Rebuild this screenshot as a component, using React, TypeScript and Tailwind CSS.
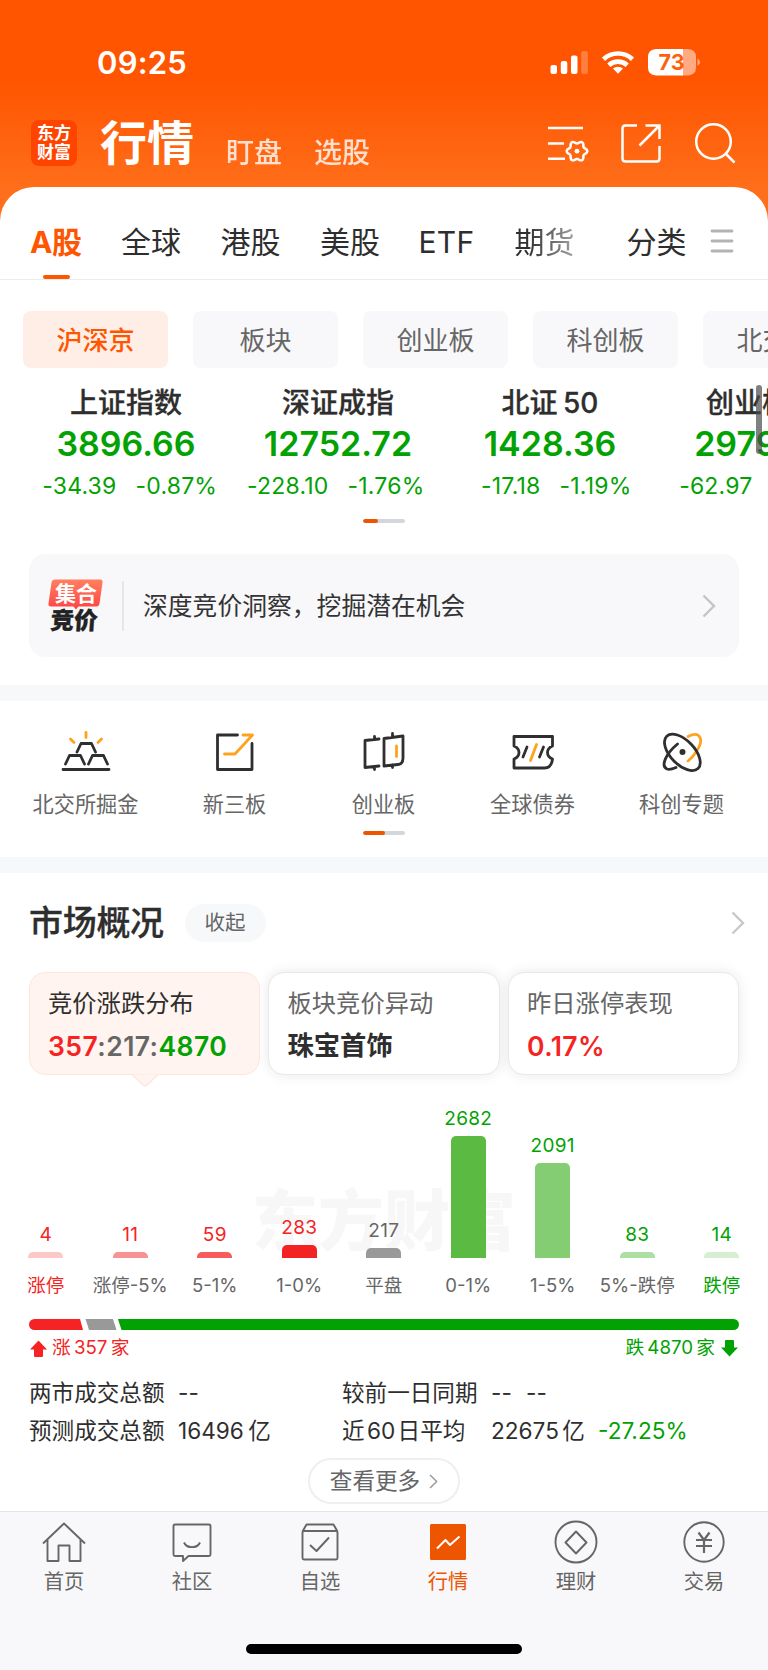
import { ReactNode } from 'react'

const tabs = ['全球', '港股', '美股']

const boards = ['沪深京', '板块', '创业板', '科创板', '北交所']

const indexes = [
  { name: '上证指数', value: '3896.66', diff: '-34.39', pct: '-0.87%' },
  { name: '深证成指', value: '12752.72', diff: '-228.10', pct: '-1.76%' },
  { name: '北证 50', value: '1428.36', diff: '-17.18', pct: '-1.19%' },
  { name: '创业板指', value: '2979.68', diff: '-62.97', pct: '-2.07%' },
]

const bars = [
  { label: '涨停', value: 4, height: 6, bar: 'bg-[#fcc8c8]', num: 'text-[#f52323]', text: 'text-[#f52323]' },
  { label: '涨停-5%', value: 11, height: 6, bar: 'bg-[#f99292]', num: 'text-[#f52323]', text: 'text-[#666]' },
  { label: '5-1%', value: 59, height: 6, bar: 'bg-[#f75b5b]', num: 'text-[#f52323]', text: 'text-[#666]' },
  { label: '1-0%', value: 283, height: 13, bar: 'bg-[#f42323]', num: 'text-[#f52323]', text: 'text-[#666]' },
  { label: '平盘', value: 217, height: 10, bar: 'bg-[#999]', num: 'text-[#666]', text: 'text-[#666]' },
  { label: '0-1%', value: 2682, height: 122, bar: 'bg-[#5bba42]', num: 'text-[#03a203]', text: 'text-[#666]' },
  { label: '1-5%', value: 2091, height: 95, bar: 'bg-[#84cd73]', num: 'text-[#03a203]', text: 'text-[#666]' },
  { label: '5%-跌停', value: 83, height: 6, bar: 'bg-[#addea2]', num: 'text-[#03a203]', text: 'text-[#666]' },
  { label: '跌停', value: 14, height: 6, bar: 'bg-[#d6efd1]', num: 'text-[#03a203]', text: 'text-[#03a203]' },
]

// six-lobed gear outline
const gear = Array.from({ length: 72 }, (_, i) => {
  const a = (i * Math.PI) / 36
  const r = 9 + 1.3 * Math.cos(6 * a)
  return `${(577 + r * Math.cos(a)).toFixed(2)},${(151.2 + r * Math.sin(a)).toFixed(2)}`
}).join(' ')

function Chevron({ className }: { className: string }) {
  return (
    <svg viewBox="0 0 14 24" className={className} fill="none" stroke="currentColor" strokeWidth="2.4">
      <path d="M1.5 1.5 12 12 1.5 22.5" />
    </svg>
  )
}

function StatusBar() {
  return (
    <div className="h-[100px] flex pt-[42px] pl-[97px] text-white">
      <span className="w-[453px] text-[31px] leading-[42px] font-semibold tracking-[0.2px]">09:25</span>
      <svg className="w-[160px] h-[40px]" viewBox="550 42 160 40" fill="#fff">
        <rect x="550.5" y="65" width="6.5" height="9" rx="2" />
        <rect x="560.8" y="61" width="6.5" height="13" rx="2" />
        <rect x="571" y="55.5" width="6.5" height="18.5" rx="2" />
        <rect x="581.3" y="51" width="6.5" height="23" rx="2" opacity=".25" />
        <g fill="none" stroke="#fff" strokeWidth="4.6">
          <path d="M603.5 59.2a21.5 21.5 0 0 1 29 0" />
          <path d="M608.8 65.2a13.6 13.6 0 0 1 18.4 0" />
        </g>
        <path d="M618 73.8l-5-5.2a7.4 7.4 0 0 1 10 0z" />
        <path d="M656 49h27v26.5h-27q-8-.5-8-8v-10.5q0-7.5 8-8z" />
        <path d="M683 49h5q8 .5 8 8v10.5q0 7.5-8 8h-5z" opacity=".5" />
        <path d="M697.5 58.5q2.5 1.5 2.5 3.8t-2.5 3.8z" opacity=".5" />
        <text x="671.5" y="70" textAnchor="middle" fontSize="21.5" fontWeight="700" fill="#ff5f0e">73</text>
      </svg>
    </div>
  )
}

function Header() {
  return (
    <div className="h-[88px] flex items-start pl-[31px] text-white">
      <div className="mt-[20px] w-[46px] h-[46px] rounded-[8px] bg-[#ff4400] flex flex-col items-center justify-center font-bold text-[17px] leading-[19px]">
        <span>东方</span>
        <span>财富</span>
      </div>
      <span className="ml-[23px] mt-[15px] w-[126px] text-[47px] leading-[56px] font-bold">行情</span>
      <span className="mt-[33px] w-[88px] text-[28px] leading-[40px] font-medium opacity-80">盯盘</span>
      <span className="mt-[33px] w-[226px] text-[28px] leading-[40px] font-medium opacity-80">选股</span>
      <svg className="mt-[20px] w-[200px] h-[48px]" viewBox="540 120 200 48" fill="none" stroke="#fff" strokeWidth="2.5">
        <path d="M548 128h35M548 143.5h16M548 158.8h17" />
        <polygon points={gear} strokeLinejoin="round" />
        <circle cx="577" cy="151.2" r="2.4" fill="#fff" stroke="none" />
        <path d="M637 125.500h-11.500q-3 0-3 3v30q0 3 3 3h31q3 0 3-3v-12.500M645.500 125.500h14v13.500M659.500 125.500l-20 20" />
        <circle cx="713.500" cy="141.500" r="17.300" />
        <path d="M725.500 153.500l9 9" />
      </svg>
    </div>
  )
}

function MarketTabs() {
  return (
    <div className="h-[93px] border-b border-[#ececec] text-[30px] leading-[44px] text-[#2e2e2e] pt-[33px] flex pl-[30px]">
      <div className="w-[91px] flex flex-col">
        <span className="text-[#ff5500] font-bold tracking-[-0.3px]">A股</span>
        <span className="mt-[11px] ml-[13px] w-[27px] h-[4px] rounded-full bg-[#ff5500]" />
      </div>
      {tabs.map(tab => (
        <span key={tab} className="w-[99.5px]">{tab}</span>
      ))}
      <span className="w-[95px] -ml-px mr-px tracking-[0.3px]">ETF</span>
      <span className="w-[112px] bg-gradient-to-r from-[#2e2e2e] from-10% to-[#aaa] to-55% bg-clip-text text-transparent">期货</span>
      <span className="w-[83px]">分类</span>
      <svg className="w-[24px] h-[24px] mt-[9px]" viewBox="0 0 24 24" stroke="#b3b3b3" strokeWidth="2.8" strokeLinecap="round">
        <path d="M2 2h20M2 12h20M2 22h20" />
      </svg>
    </div>
  )
}

function Pager({ wide }: { wide?: boolean }) {
  return (
    <div className="mx-auto w-[42px] h-[4px] rounded-full bg-[#d3d6dc] overflow-hidden">
      <div className={`h-full rounded-full bg-[#ee5500] ${wide ? 'w-[22px]' : 'w-[15px]'}`} />
    </div>
  )
}

function Indexes() {
  return (
    <div className="relative h-[237px] mt-[31px] overflow-hidden">
      <div className="flex gap-[25px] pl-[23px] h-[57px]">
        {boards.map((b, i) => (
          <span
            key={b}
            className={`w-[145px] shrink-0 rounded-[8px] text-center text-[26px] leading-[59px] ${i === 0 ? 'bg-[#ffeee5] text-[#ff5500] font-medium' : 'bg-[#f8f8fb] text-[#666]'}`}
          >
            {b}
          </span>
        ))}
      </div>
      <div className="flex pl-[20px] pt-[15px] h-[151px]">
        {indexes.map(item => (
          <div key={item.name} className="w-[212px] shrink-0 text-center whitespace-nowrap">
            <div className="text-[28px] leading-[40px] font-medium text-[#2e2e2e] [-webkit-text-stroke:0.3px] [word-spacing:-2px]">{item.name}</div>
            <div className="text-[34px] leading-[42px] font-semibold text-[#03a203]">{item.value}</div>
            <div className="text-[23px] leading-[42px] tracking-[0.2px] text-[#03a203] flex">
              <span className="w-[96.5px] flex justify-end">{item.diff}</span>
              <span className="ml-[19px]">{item.pct}</span>
            </div>
          </div>
        ))}
      </div>
      <Pager />
      <div className="absolute right-[6px] top-[74px] w-[6px] h-[69px] rounded-full bg-[#4a4a4a]/70" />
    </div>
  )
}

function Banner() {
  return (
    <div className="mx-[29px] mt-[6px] h-[103px] rounded-[16px] bg-[#f8f8fb] flex items-center">
      <svg className="ml-[18px] w-[58px] h-[56px]" viewBox="47 578 58 56">
        <defs>
          <linearGradient id="bubble" x1="0" y1="0" x2="0" y2="1">
            <stop offset="0" stopColor="#ff8060" />
            <stop offset="1" stopColor="#ff4343" />
          </linearGradient>
        </defs>
        <path d="M55 579.5h45q3 0 2.5 3l-3 21q-.5 3-3 3h-18l-2.5 3-2.5-3h-22.5q-3 0-2.5-3l3-21q.5-3 3.5-3z" fill="url(#bubble)" />
        <text x="55" y="601" fontSize="21" fontWeight="700" fill="#fff">集合</text>
        <text x="51" y="629.5" fontSize="23.5" fontWeight="900" fill="#222" stroke="#222" strokeWidth="0.4" transform="skewX(-4) translate(43 0)">竞价</text>
      </svg>
      <div className="ml-[17px] w-[2px] h-[50px] bg-[#e6e6e8]" />
      <span className="ml-[19px] text-[24.8px] leading-[40px] text-[#333]">深度竞价洞察，挖掘潜在机会</span>
      <Chevron className="ml-auto mr-[23px] w-[14px] h-[24px] text-[#c4c4c6]" />
    </div>
  )
}

function Shortcut({ label, children }: { label: string; children: ReactNode }) {
  return (
    <div className="w-[149px] flex flex-col items-center">
      <svg className="w-[50px] h-[42px]" viewBox="-25 -21 50 42" fill="none" stroke="#2f2f2f" strokeWidth="2.8" strokeLinecap="round" strokeLinejoin="round">
        {children}
      </svg>
      <span className="mt-[13px] text-[21.2px] leading-[36px] text-[#666]">{label}</span>
    </div>
  )
}

function Shortcuts() {
  return (
    <div className="h-[156px] pt-[30px]">
      <div className="flex pl-[11px] h-[100px]">
        <Shortcut label="北交所掘金">
          <path d="M-23 17.5h46M-20.5 12l4-8.5h11l4 8.5M2.5 12l4-8.5h11l4 8.5M-9 0l4-8.5h10.5l4 8.5" />
          <path d="M0-19.5v5M-15.5-13l3.500 3.500M15.500-13l-3.500 3.500" stroke="#ffa31e" />
        </Shortcut>
        <Shortcut label="新三板">
          <path d="M2.5-17h-20v34.5h34.5v-26" />
          <path d="M8-17h9.5l-17.5 19h-10.5" stroke="#ffa31e" />
        </Shortcut>
        <Shortcut label="创业板">
          <path d="M-5-13l-14 1.5v27l14-1.5M-9.5-15.5v3M-9.5 14.5v3M0-13.5l19-2.5v22q0 6-5 6.5l-14 1.5zM8.5-18.5v3M8.5 13v2.5" />
          <path d="M12.5-6v10.5" stroke="#ffa31e" />
        </Shortcut>
        <Shortcut label="全球债券">
          <path d="M-19-15.5h38.5v9.5q-5 2-5 6.5t5 6.5q-1 9-8 9h-30.5v-9q5-2 5-6.500t-5-6.500z" />
          <path d="M-6-5l-4 10M10.5-5l-4 10" />
          <path d="M3.5-7.5l-6 16" stroke="#ffa31e" />
        </Shortcut>
        <Shortcut label="科创专题">
          <path d="M6-15.5c12-6 17 3 8 15.5q-3 5-8 9" stroke="#ffa31e" />
          <ellipse cx="0.5" cy="0" rx="22.5" ry="12" transform="rotate(46)" />
          <path d="M-4.5-8c-12 10-17 22-10.5 25q3 1 9-1.5" />
          <circle cx="0.5" cy="0" r="1.6" fill="#2f2f2f" />
        </Shortcut>
      </div>
      <Pager wide />
    </div>
  )
}

function Overview() {
  return (
    <div>
      <div className="flex items-center h-[99px] pl-[29px]">
        <span className="w-[155.5px] text-[34px] leading-[48px] font-medium text-[#2e2e2e] [-webkit-text-stroke:0.3px] tracking-[-0.3px]">市场概况</span>
        <span className="w-[81px] h-[38px] rounded-full bg-[#f7f8fa] text-center text-[20.5px] leading-[38px] text-[#666]">收起</span>
        <Chevron className="ml-auto mr-[23px] w-[14px] h-[24px] text-[#c8c8c8]" />
      </div>
      <div className="flex gap-[8px] px-[29px] text-[24.3px]">
        <div className="relative flex-1 h-[103px] pl-[18px] pt-[10px] rounded-[16px] border-[1.5px] border-[#ffe6dc] bg-[#fff4ef]">
          <div className="leading-[40px] text-[#2e2e2e]">竞价涨跌分布</div>
          <div className="mt-[2px] text-[26.5px] leading-[42px] font-semibold tracking-[0.45px]">
            <span className="text-[#f52323]">357</span>
            <span className="text-[#666]">:217:</span>
            <span className="text-[#03a203]">4870</span>
          </div>
          <svg className="absolute left-[101px] top-[101px] w-[28px] h-[14px]" viewBox="0 0 28 14">
            <path d="M1 0.5l11 10.5q2 1.5 4 0l11-10.5" fill="#fff4ef" stroke="#ffe6dc" strokeWidth="1.5" />
          </svg>
        </div>
        <div className="flex-1 h-[103px] pl-[18.5px] pt-[10px] rounded-[16px] border border-[#e9e9e9] bg-white shadow-[0_0_14px_rgba(0,0,0,0.09)]">
          <div className="leading-[40px] text-[#666]">板块竞价异动</div>
          <div className="mt-[2px] text-[26.3px] leading-[42px] font-bold text-[#2e2e2e]">珠宝首饰</div>
        </div>
        <div className="flex-1 h-[103px] pl-[18.5px] pt-[10px] rounded-[16px] border border-[#e9e9e9] bg-white shadow-[0_0_14px_rgba(0,0,0,0.09)]">
          <div className="leading-[40px] text-[#666]">昨日涨停表现</div>
          <div className="mt-[2px] text-[26.5px] leading-[42px] font-semibold tracking-[0.4px] text-[#f52323]">0.17%</div>
        </div>
      </div>
    </div>
  )
}

function Distribution() {
  return (
    <div>
      <div className="relative h-[183px]">
        {/* watermark behind the bars */}
        <div className="absolute left-[252px] top-[106px] text-[66px] leading-[80px] font-black text-[#f7f7f7] whitespace-nowrap">东方财富</div>
        <div className="relative h-full flex items-end pl-[3.5px]">
          {bars.map(b => (
            <div key={b.label} className="w-[84.5px] flex flex-col items-center">
              <span className={`text-[19px] leading-[24px] mb-[5px] tracking-[0.3px] ${b.num}`}>{b.value}</span>
              <div className={`w-[35px] rounded-t-[5px] ${b.bar}`} style={{ height: b.height }} />
            </div>
          ))}
        </div>
      </div>
      <div className="flex pl-[3.5px] pt-[12px] h-[61px]">
        {bars.map(b => (
          <span key={b.label} className={`w-[84.5px] flex justify-center whitespace-nowrap text-[18.5px] leading-[30px] ${b.text}`}>{b.label}</span>
        ))}
      </div>
      <svg className="block ml-[29px] w-[710px] h-[11px]" viewBox="0 0 710 11">
        <path d="M5.5 0h45.5l3 11h-48.5a5.5 5.5 0 0 1 0-11z" fill="#f52323" />
        <path d="M56.5 0h27.5l3.5 11h-27.5z" fill="#999" />
        <path d="M89 0h615.5a5.5 5.5 0 0 1 0 11h-612z" fill="#03a203" />
      </svg>
      <div className="flex items-center justify-between px-[30px] h-[36px] text-[18.7px] leading-[30px] [word-spacing:-2px]">
        <span className="flex items-center gap-[5px] text-[#f52323]">
          <svg className="w-[17px] h-[17px]" viewBox="0 0 17 17" fill="currentColor"><path d="M8.5 0.5 17 9.5h-4v6.5q0 1-1 1H5q-1 0-1-1V9.500H0z" /></svg>
          涨 357 家
        </span>
        <span className="flex items-center gap-[6px] text-[#03a203]">
          跌 4870 家
          <svg className="w-[17px] h-[17px] rotate-180" viewBox="0 0 17 17" fill="currentColor"><path d="M8.5 0.5 17 9.5h-4v6.5q0 1-1 1H5q-1 0-1-1V9.500H0z" /></svg>
        </span>
      </div>
    </div>
  )
}

function Turnover() {
  return (
    <div className="pt-[8px] text-[22.6px] leading-[38px] text-[#2e2e2e]">
      <div className="flex pl-[29px]">
        <span className="w-[149px]">两市成交总额</span>
        <span className="w-[164px]">--</span>
        <span className="w-[149px]">较前一日同期</span>
        <span className="w-[35px]">--</span>
        <span>--</span>
      </div>
      <div className="flex pl-[29px]">
        <span className="w-[149px]">预测成交总额</span>
        <span className="w-[164px] [word-spacing:-2px]">16496 亿</span>
        <span className="w-[149px] [word-spacing:-4px]">近 60 日平均</span>
        <span className="w-[107px] [word-spacing:-3px]">22675 亿</span>
        <span className="text-[#03a203]">-27.25%</span>
      </div>
      <div className="mx-auto mt-[8px] w-[152px] h-[46px] rounded-full border-2 border-[#efefef] flex items-center justify-center gap-[9px] text-[#666]">
        <span>查看更多</span>
        <Chevron className="w-[9px] h-[15px] text-[#999]" />
      </div>
    </div>
  )
}

function NavItem({ label, active, children }: { label: string; active?: boolean; children: ReactNode }) {
  return (
    <div className={`w-[128px] flex flex-col items-center ${active ? 'text-[#ee5500]' : 'text-[#666]'}`}>
      <svg className="w-[44px] h-[44px]" viewBox="-22 -22 44 44" fill="none" stroke="currentColor" strokeWidth="1.9" strokeLinejoin="round">
        {children}
      </svg>
      <span className="mt-[3px] text-[20.3px] leading-[30px]">{label}</span>
    </div>
  )
}

function BottomNav() {
  return (
    <div className="h-[159px] mt-[7px] border-t border-[#e3e4e6] bg-[#f8f8fb] pt-[8px]">
      <div className="flex h-[124px]">
        <NavItem label="首页">
          <path d="M-21 1.5 0-18.5 21 1.5M-16.5-2v21h11v-15.500H5.500V19h11V-2" />
        </NavItem>
        <NavItem label="社区">
          <path d="M-17-17.500h34q1.500 0 1.500 1.500v28.500q0 1.500-1.500 1.500H-3.500l-5.500 5v-5h-8q-1.500 0-1.500-1.500V-16q0-1.500 1.500-1.500zM-8 0.500a8.500 7 0 0 0 16 0" />
        </NavItem>
        <NavItem label="自选">
          <path d="M-17.500-10.500l4-7h27l4 7M-16-11h32q1.500 0 1.500 1.500v25.500q0 1.500-1.500 1.500h-32q-1.500 0-1.500-1.500V-9.500q0-1.500 1.500-1.500zM-10 3l6.500 6L9-4.500" />
        </NavItem>
        <NavItem label="行情" active>
          <rect x="-18" y="-18" width="36" height="36" rx="1.5" fill="#ee5500" stroke="none" />
          <path d="M-11 6.500l8.500-8.500 4.500 5L11.500-5.500" stroke="#fff" strokeWidth="2" />
        </NavItem>
        <NavItem label="理财">
          <circle r="20.5" />
          <path d="M0-10.500 10.500 0.500 0 11.500-10.500 0.500z" />
        </NavItem>
        <NavItem label="交易">
          <circle r="19.7" />
          <path d="M-5.500-9.500 0-2 5.500-9.500M-8-2h16M-8 4h16M0-2v13" strokeWidth="2.2" />
        </NavItem>
      </div>
      <div className="mx-auto w-[276px] h-[10px] rounded-full bg-black" />
    </div>
  )
}

export default function App() {
  return (
    <div
      className="w-[768px] h-[1670px] overflow-hidden bg-white bg-no-repeat bg-[linear-gradient(180deg,#ff5500_0,#ff5500_80px,#ff6e1a_187px,#ff711f_240px,#fff_240px)]"
      style={{ fontFamily: 'Inter, "Noto Sans CJK SC", sans-serif' }}
    >
      <StatusBar />
      <Header />
      <div className="-mt-px rounded-t-[34px] bg-white">
        <MarketTabs />
        <Indexes />
        <Banner />
        <div className="mt-[28px] h-[16px] bg-[#f7f8fa]" />
        <Shortcuts />
        <div className="h-[16px] bg-[#f7f8fa]" />
        <Overview />
        <Distribution />
        <Turnover />
        <BottomNav />
      </div>
    </div>
  )
}
